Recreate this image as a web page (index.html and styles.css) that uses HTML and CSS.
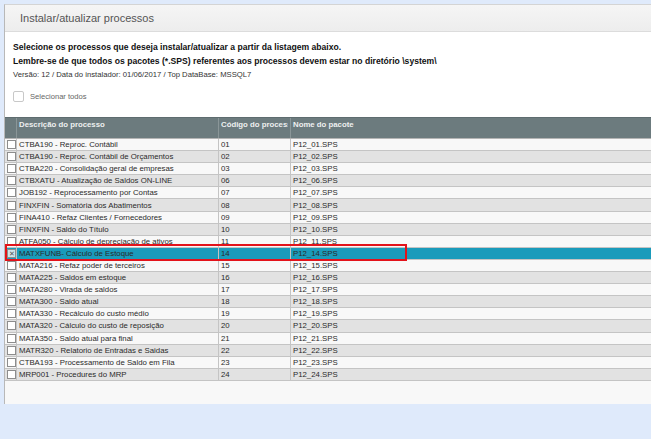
FILE: index.html
```html
<!DOCTYPE html>
<html>
<head>
    <title>Instalar/atualizar processos</title>
    <meta name="viewport" content="width=device-width, initial-scale=1.0">
    <link rel="stylesheet" href="styles.css">
</head>
<body>
    <div class="panel">
        <div class="panel-head">Instalar/atualizar processos</div>
        <div class="intro">
            <p class="strong">Selecione os processos que deseja instalar/atualizar a partir da listagem abaixo.</p>
            <p class="strong">Lembre-se de que todos os pacotes (*.SPS) referentes aos processos devem estar no diretório \system\</p>
            <p class="version">Versão: 12 / Data do instalador: 01/06/2017 / Top DataBase: MSSQL7</p>
            <label class="select-all"><span class="round-check"></span>Selecionar todos</label>
        </div>

        <div class="grid-wrap">
            <table class="grid">
                <thead>
                    <tr>
                        <th class="c-check"></th>
                        <th class="c-desc">Descrição do processo</th>
                        <th class="c-code"><div class="clip">Código do processo</div></th>
                        <th>Nome do pacote</th>
                    </tr>
                </thead>
                <tbody>
                    <tr><td><span class="box"></span></td><td>CTBA190 - Reproc. Contábil</td><td>01</td><td>P12_01.SPS</td></tr>
                    <tr><td><span class="box"></span></td><td>CTBA190 - Reproc. Contábil de Orçamentos</td><td>02</td><td>P12_02.SPS</td></tr>
                    <tr><td><span class="box"></span></td><td>CTBA220 - Consolidação geral de empresas</td><td>03</td><td>P12_03.SPS</td></tr>
                    <tr><td><span class="box"></span></td><td>CTBXATU - Atualização de Saldos ON-LINE</td><td>06</td><td>P12_06.SPS</td></tr>
                    <tr><td><span class="box"></span></td><td>JOB192 - Reprocessamento por Contas</td><td>07</td><td>P12_07.SPS</td></tr>
                    <tr><td><span class="box"></span></td><td>FINXFIN - Somatória dos Abatimentos</td><td>08</td><td>P12_08.SPS</td></tr>
                    <tr><td><span class="box"></span></td><td>FINA410 - Refaz Clientes / Fornecedores</td><td>09</td><td>P12_09.SPS</td></tr>
                    <tr><td><span class="box"></span></td><td>FINXFIN - Saldo do Título</td><td>10</td><td>P12_10.SPS</td></tr>
                    <tr><td><span class="box"></span></td><td>ATFA050 - Cálculo de depreciação de ativos</td><td>11</td><td>P12_11.SPS</td></tr>
                    <tr class="selected"><td><span class="box checked">&#10005;</span></td><td>MATXFUNB- Cálculo de Estoque</td><td>14</td><td>P12_14.SPS</td></tr>
                    <tr><td><span class="box"></span></td><td>MATA216 - Refaz poder de terceiros</td><td>15</td><td>P12_15.SPS</td></tr>
                    <tr><td><span class="box"></span></td><td>MATA225 - Saldos em estoque</td><td>16</td><td>P12_16.SPS</td></tr>
                    <tr><td><span class="box"></span></td><td>MATA280 - Virada de saldos</td><td>17</td><td>P12_17.SPS</td></tr>
                    <tr><td><span class="box"></span></td><td>MATA300 - Saldo atual</td><td>18</td><td>P12_18.SPS</td></tr>
                    <tr><td><span class="box"></span></td><td>MATA330 - Recálculo do custo médio</td><td>19</td><td>P12_19.SPS</td></tr>
                    <tr><td><span class="box"></span></td><td>MATA320 - Cálculo do custo de reposição</td><td>20</td><td>P12_20.SPS</td></tr>
                    <tr><td><span class="box"></span></td><td>MATA350 - Saldo atual para final</td><td>21</td><td>P12_21.SPS</td></tr>
                    <tr><td><span class="box"></span></td><td>MATR320 - Relatorio de Entradas e Saidas</td><td>22</td><td>P12_22.SPS</td></tr>
                    <tr><td><span class="box"></span></td><td>CTBA193 - Processamento de Saldo em Fila</td><td>23</td><td>P12_23.SPS</td></tr>
                    <tr><td><span class="box"></span></td><td>MRP001 - Procedures do MRP</td><td>24</td><td>P12_24.SPS</td></tr>
                </tbody>
            </table>
            <!-- marcação vermelha sobre a linha selecionada -->
            <div class="mark"></div>
        </div>
    </div>
</body>
</html>
```

FILE: styles.css
```css
body {
    font-family: "Liberation Sans", Arial, sans-serif;
    margin: 0;
    padding: 0;
    background-color: #dfeafb;
}
.panel {
    margin: 4px 0 0 4px;
    height: 399px;
    border-top: 1px solid #d4d4d4;
    border-left: 1px solid #b8b8b8;
    background-color: #fff;
    display: flex;
    flex-direction: column;
}
.panel-head {
    height: 26px;
    line-height: 26px;
    padding-left: 15px;
    font-size: 11px;
    color: #555;
    background: linear-gradient(#f5f5f5, #ededed);
    border-bottom: 1px solid #dcdcdc;
}
.intro {
    padding: 8px 8px 0 8px;
    height: 77px;
}
.intro p {
    margin: 0;
}
.strong {
    font-size: 8.6px;
    font-weight: bold;
    color: #111;
    line-height: 14px;
}
.version {
    font-size: 7.7px;
    color: #333;
    line-height: 14px;
}
.select-all {
    display: flex;
    align-items: center;
    margin-top: 9px;
    font-size: 7.6px;
    color: #666;
}
.round-check {
    width: 9px;
    height: 9px;
    border: 1px solid #c8c8c8;
    border-radius: 2px;
    margin-right: 6px;
    background-color: #fff;
}
.grid-wrap {
    position: relative;
    flex: 1;
    background-color: #f8f8f8;
}
.grid {
    border-collapse: collapse;
    width: 100%;
    table-layout: fixed;
    font-size: 7.8px;
    color: #2a2a2a;
}
.grid th {
    height: 18px;
    background-color: #6c7b7e;
    border-top: 1px solid #5e6c6f;
    border-bottom: 1px solid #b4b4b4;
    border-left: 1px solid #8a9698;
    color: #eef0f0;
    font-weight: bold;
    text-align: left;
    vertical-align: top;
    padding: 2px 2px 0 2px;
    font-size: 7.8px;
}
.grid th:first-child {
    border-left: none;
}
.c-check {
    width: 7px;
}
.c-desc {
    width: 197px;
}
.c-code {
    width: 67px;
}
.clip {
    white-space: nowrap;
    overflow: hidden;
}
.grid td {
    height: 11.1px;
    padding: 0 2px;
    border-bottom: 1px solid #c4c4c4;
    border-left: 1px solid #c4c4c4;
    white-space: nowrap;
    overflow: hidden;
    line-height: 11px;
}
.grid td:first-child {
    border-left: none;
    padding: 0 1px 0 2px;
}
.grid tbody tr:nth-child(odd) {
    background-color: #f8f8f8;
}
.grid tbody tr:nth-child(even) {
    background-color: #e2e2e2;
}
.grid tbody tr.selected {
    background-color: #1a9bbb;
}
.box {
    display: block;
    width: 7px;
    height: 7px;
    border: 1px solid #8d8d8d;
    background-color: #fff;
    font-size: 7px;
    line-height: 7px;
    text-align: center;
    color: #555;
}
.box.checked {
    background-color: #cfe3ea;
}
.mark {
    position: absolute;
    left: 0;
    top: 127px;
    width: 398px;
    height: 13px;
    border: 2px solid #e3131b;
}
```
